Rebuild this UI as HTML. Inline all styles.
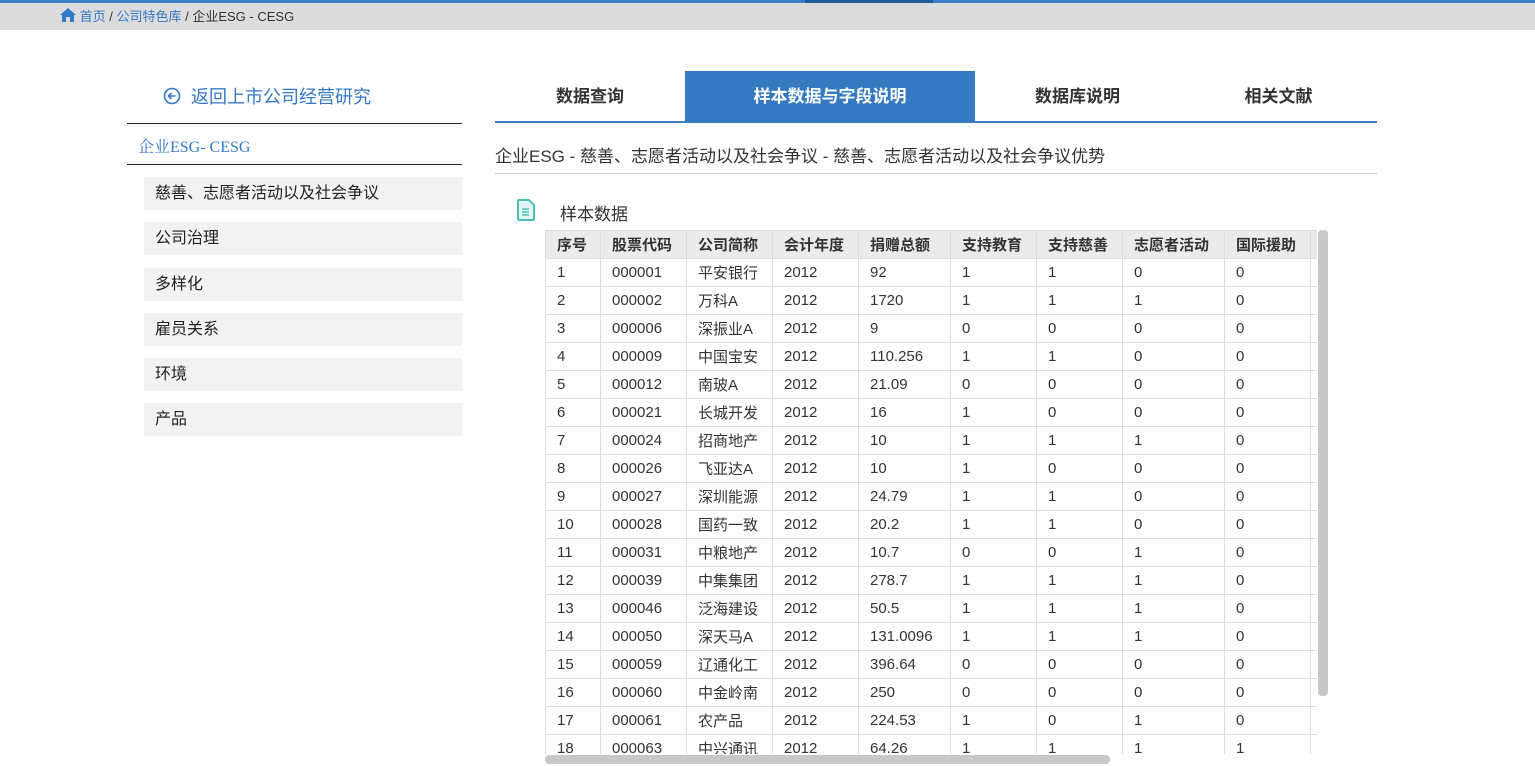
<!DOCTYPE html>
<html><head><meta charset="utf-8"><style>
*{margin:0;padding:0;box-sizing:border-box}
body{width:1535px;height:766px;overflow:hidden;background:#fff;font-family:"Liberation Sans","Noto Sans CJK SC",sans-serif;position:relative;color:#333}
.abs{position:absolute}
.topline{left:0;top:0;width:1535px;height:3px;background:#3a7ec3}
.bar{left:0;top:3px;width:1535px;height:27px;background:#dcdcdc;font-size:13px;line-height:27px;padding-left:60px;color:#333}
.bar a{color:#3478c6}
.menu{left:144px;width:318px;height:33px;background:#f2f2f2;font-size:16px;line-height:33px;padding-left:11px;color:#222}
.tab{top:71px;height:51px;line-height:52px;text-align:center;font-size:17px;font-weight:bold;color:#333}
table{border-collapse:collapse;font-size:15px;table-layout:fixed}
td,th{border:1px solid #ddd;height:28px;padding:0 0 0 11px;text-align:left;white-space:nowrap;overflow:hidden;font-weight:normal;color:#333}
th{background:#ebebeb;font-weight:bold;color:#333}
</style></head><body>
<div class="abs topline"></div>
<div class="abs" style="left:805px;top:0;width:128px;height:3px;background:#1f5c9a"></div>
<div class="abs bar"><svg width="16" height="14" viewBox="0 0 16 14" style="vertical-align:-1px"><path d="M8 0L0 7h2v7h4V9h4v5h4V7h2z" fill="#3478c6"/></svg> <a>首页</a> / <a>公司特色库</a> / 企业ESG - CESG</div>

<div class="abs" style="left:163px;top:86px;font-size:18px;color:#3478c6;line-height:22px"><svg width="18" height="18" viewBox="0 0 18 18" style="vertical-align:-2px"><circle cx="9" cy="9" r="7.5" fill="none" stroke="#3478c6" stroke-width="1.6"/><path d="M12.5 9H6M8.5 6L5.5 9l3 3" fill="none" stroke="#3478c6" stroke-width="1.6"/></svg> &nbsp;返回上市公司经营研究</div>
<div class="abs" style="left:127px;top:123px;width:335px;height:1px;background:#222"></div>
<div class="abs" style="left:138px;top:134px;font-size:16px;color:#3478c6;font-family:'Liberation Serif','Noto Serif CJK SC',serif">企业ESG- CESG</div>
<div class="abs" style="left:127px;top:164px;width:335px;height:1px;background:#222"></div>
<div class="abs menu" style="top:177px">慈善、志愿者活动以及社会争议</div>
<div class="abs menu" style="top:222px">公司治理</div>
<div class="abs menu" style="top:268px">多样化</div>
<div class="abs menu" style="top:313px">雇员关系</div>
<div class="abs menu" style="top:358px">环境</div>
<div class="abs menu" style="top:403px">产品</div>

<div class="abs tab" style="left:495px;width:190px">数据查询</div>
<div class="abs tab" style="left:685px;width:290px;background:#3579c0;color:#fff">样本数据与字段说明</div>
<div class="abs tab" style="left:975px;width:205px">数据库说明</div>
<div class="abs tab" style="left:1180px;width:197px">相关文献</div>
<div class="abs" style="left:495px;top:121px;width:882px;height:2px;background:#3a7ec3"></div>
<div class="abs" style="left:495px;top:142px;font-size:17px;color:#333">企业ESG - 慈善、志愿者活动以及社会争议 - 慈善、志愿者活动以及社会争议优势</div>
<div class="abs" style="left:495px;top:173px;width:882px;height:1px;background:#ccc"></div>

<svg class="abs" style="left:517px;top:199px" width="18" height="22" viewBox="0 0 18 22"><path d="M2 1h10l5 5v14a1 1 0 0 1-1 1H2a1 1 0 0 1-1-1V2a1 1 0 0 1 1-1z" fill="#e4f6f4" stroke="#4cc0bc" stroke-width="2"/><path d="M5 10h7M5 13h7M5 16h7" stroke="#4cc0bc" stroke-width="1.6"/></svg>
<div class="abs" style="left:560px;top:200px;font-size:17px;color:#333">样本数据</div>

<div class="abs" style="left:545px;top:230px;width:772px;height:524px;overflow:hidden">
<table style="width:780px">
<colgroup><col style="width:55px"><col style="width:86px"><col style="width:86px"><col style="width:86px"><col style="width:92px"><col style="width:86px"><col style="width:86px"><col style="width:102px"><col style="width:86px"><col style="width:15px"></colgroup>
<tr><th>序号</th><th>股票代码</th><th>公司简称</th><th>会计年度</th><th>捐赠总额</th><th>支持教育</th><th>支持慈善</th><th>志愿者活动</th><th>国际援助</th><th></th></tr>
<tr><td>1</td><td>000001</td><td>平安银行</td><td>2012</td><td>92</td><td>1</td><td>1</td><td>0</td><td>0</td><td></td></tr>
<tr><td>2</td><td>000002</td><td>万科A</td><td>2012</td><td>1720</td><td>1</td><td>1</td><td>1</td><td>0</td><td></td></tr>
<tr><td>3</td><td>000006</td><td>深振业A</td><td>2012</td><td>9</td><td>0</td><td>0</td><td>0</td><td>0</td><td></td></tr>
<tr><td>4</td><td>000009</td><td>中国宝安</td><td>2012</td><td>110.256</td><td>1</td><td>1</td><td>0</td><td>0</td><td></td></tr>
<tr><td>5</td><td>000012</td><td>南玻A</td><td>2012</td><td>21.09</td><td>0</td><td>0</td><td>0</td><td>0</td><td></td></tr>
<tr><td>6</td><td>000021</td><td>长城开发</td><td>2012</td><td>16</td><td>1</td><td>0</td><td>0</td><td>0</td><td></td></tr>
<tr><td>7</td><td>000024</td><td>招商地产</td><td>2012</td><td>10</td><td>1</td><td>1</td><td>1</td><td>0</td><td></td></tr>
<tr><td>8</td><td>000026</td><td>飞亚达A</td><td>2012</td><td>10</td><td>1</td><td>0</td><td>0</td><td>0</td><td></td></tr>
<tr><td>9</td><td>000027</td><td>深圳能源</td><td>2012</td><td>24.79</td><td>1</td><td>1</td><td>0</td><td>0</td><td></td></tr>
<tr><td>10</td><td>000028</td><td>国药一致</td><td>2012</td><td>20.2</td><td>1</td><td>1</td><td>0</td><td>0</td><td></td></tr>
<tr><td>11</td><td>000031</td><td>中粮地产</td><td>2012</td><td>10.7</td><td>0</td><td>0</td><td>1</td><td>0</td><td></td></tr>
<tr><td>12</td><td>000039</td><td>中集集团</td><td>2012</td><td>278.7</td><td>1</td><td>1</td><td>1</td><td>0</td><td></td></tr>
<tr><td>13</td><td>000046</td><td>泛海建设</td><td>2012</td><td>50.5</td><td>1</td><td>1</td><td>1</td><td>0</td><td></td></tr>
<tr><td>14</td><td>000050</td><td>深天马A</td><td>2012</td><td>131.0096</td><td>1</td><td>1</td><td>1</td><td>0</td><td></td></tr>
<tr><td>15</td><td>000059</td><td>辽通化工</td><td>2012</td><td>396.64</td><td>0</td><td>0</td><td>0</td><td>0</td><td></td></tr>
<tr><td>16</td><td>000060</td><td>中金岭南</td><td>2012</td><td>250</td><td>0</td><td>0</td><td>0</td><td>0</td><td></td></tr>
<tr><td>17</td><td>000061</td><td>农产品</td><td>2012</td><td>224.53</td><td>1</td><td>0</td><td>1</td><td>0</td><td></td></tr>
<tr><td>18</td><td>000063</td><td>中兴通讯</td><td>2012</td><td>64.26</td><td>1</td><td>1</td><td>1</td><td>1</td><td></td></tr>
</table></div>
<div class="abs" style="left:1318px;top:230px;width:10px;height:466px;background:#c8c8c8;border-radius:4px"></div>
<div class="abs" style="left:545px;top:755px;width:565px;height:9px;background:#c8c8c8;border-radius:4px"></div>
</body></html>
